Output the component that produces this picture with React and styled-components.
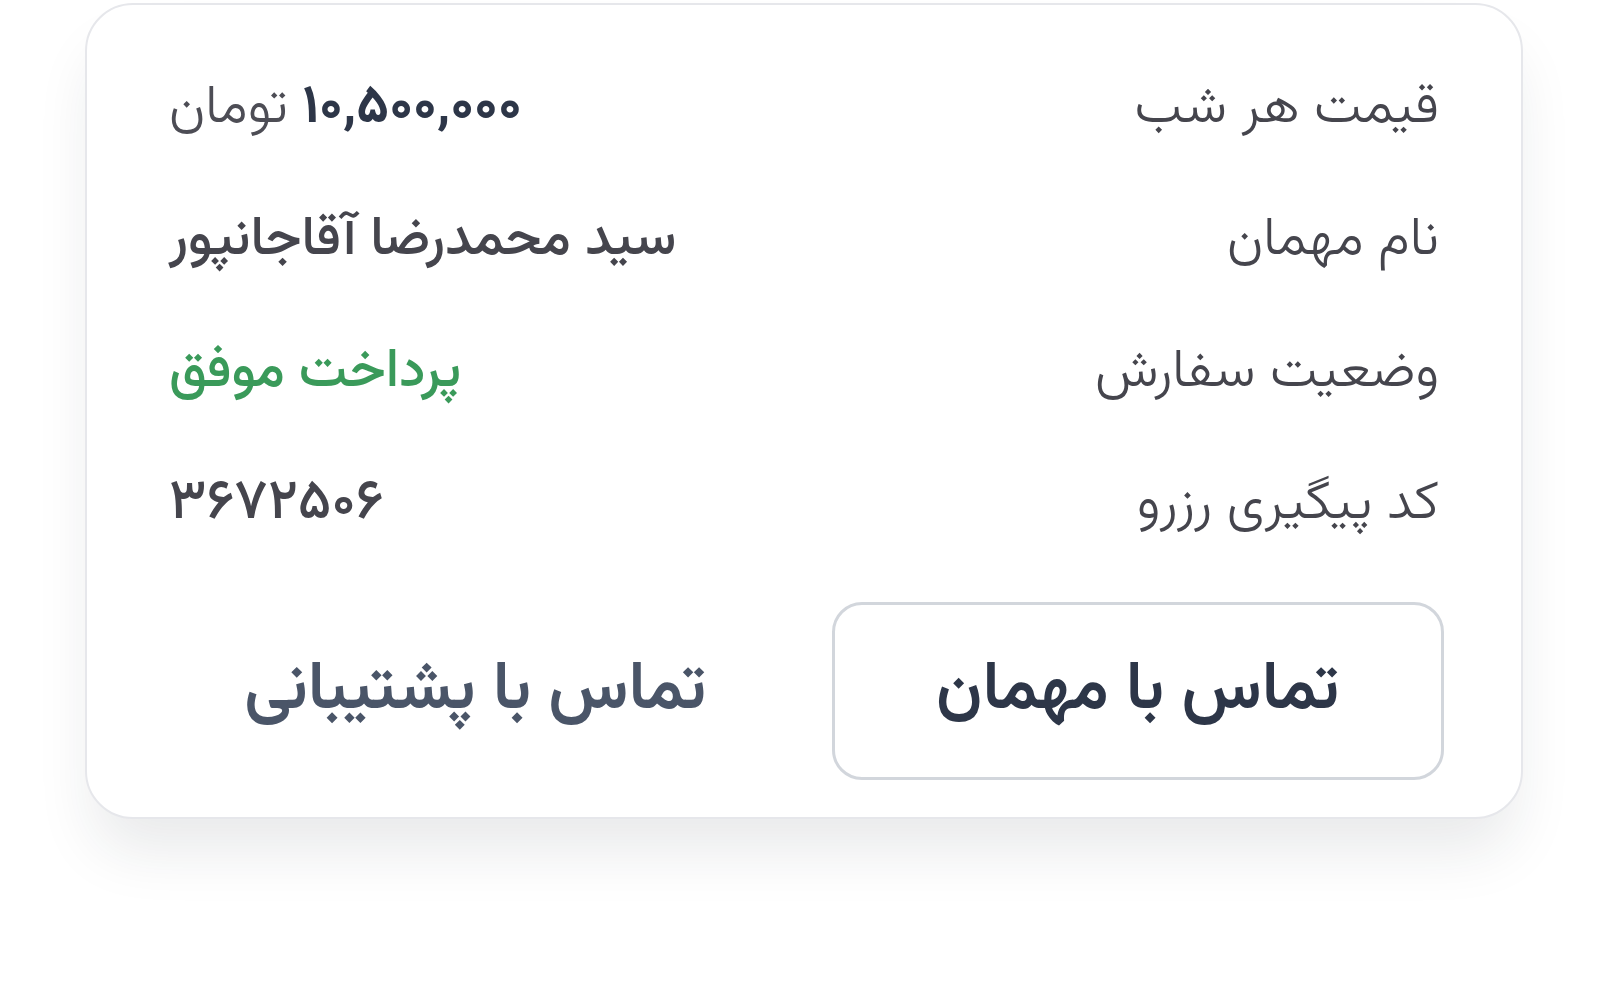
import React from 'react'
import styled, { createGlobalStyle } from 'styled-components'

const GlobalStyle = createGlobalStyle`
  html, body {
    margin: 0;
    padding: 0;
    background: #ffffff;
  }
  body {
    font-family: "Vazirmatn", "DejaVu Sans", "Noto Sans", sans-serif;
  }
`

const rows = [
  { label: 'قیمت هر شب', kind: 'price', value: '۱۰,۵۰۰,۰۰۰', unit: 'تومان' },
  { label: 'نام مهمان', kind: 'name', value: 'سید محمدرضا آقاجانپور' },
  { label: 'وضعیت سفارش', kind: 'status', value: 'پرداخت موفق' },
  { label: 'کد پیگیری رزرو', kind: 'code', value: '۳۶۷۲۵۰۶' },
]

const App = () => {
  return (
    <>
      <GlobalStyle />
      <Page>
        <Card dir="rtl">
          <Details>
            {rows.map((row) => (
              <Row key={row.label}>
                <Label>{row.label}</Label>
                {row.kind === 'price' ? (
                  <Value>
                    <Amount>{row.value}</Amount> <Unit>{row.unit}</Unit>
                  </Value>
                ) : (
                  <Value $tone={row.kind}>{row.value}</Value>
                )}
              </Row>
            ))}
          </Details>
          <Actions>
            <ActionButton $outlined>تماس با مهمان</ActionButton>
            <ActionButton>تماس با پشتیبانی</ActionButton>
          </Actions>
        </Card>
      </Page>
    </>
  )
}

export default App

const Page = styled.div`
  width: 1605px;
  height: 983px;
  box-sizing: border-box;
  padding: 3px 0 0 85px;
`

const Card = styled.div`
  width: 1438px;
  box-sizing: border-box;
  background: #ffffff;
  border: 2px solid #e6e7eb;
  border-radius: 48px;
  padding: 38px 77px 37px 82px;
  box-shadow: 0 40px 60px -10px rgba(30, 35, 45, 0.1);
`

const Details = styled.div`
  display: flex;
  flex-direction: column;
  padding-right: 5px;
`

const Row = styled.div`
  height: 132px;
  display: flex;
  align-items: center;
  justify-content: space-between;
  line-height: 1.2;
`

const Label = styled.div`
  font-size: 54px;
  font-weight: 300;
  color: #45454d;
`

const Value = styled.div`
  font-size: ${({ $tone }) => ($tone === 'code' ? '56px' : '54px')};
  font-weight: ${({ $tone }) => ($tone ? 500 : 300)};
  color: ${({ $tone }) => ($tone === 'status' ? '#3a9a5a' : '#45454d')};
`

const Amount = styled.span`
  font-weight: 700;
  color: #2d3648;
`

const Unit = styled.span`
  color: #4d4d55;
`

const Actions = styled.div`
  margin-top: 31px;
  display: grid;
  grid-template-columns: 1fr 1fr;
  gap: 50px;
`

const ActionButton = styled.button`
  height: 178px;
  box-sizing: border-box;
  border: 3px solid ${({ $outlined }) => ($outlined ? '#d2d6dc' : 'transparent')};
  border-radius: 30px;
  background: #ffffff;
  font-family: inherit;
  font-size: 67px;
  font-weight: 600;
  color: ${({ $outlined }) => ($outlined ? '#2d3648' : '#4a5568')};
  cursor: pointer;
`
